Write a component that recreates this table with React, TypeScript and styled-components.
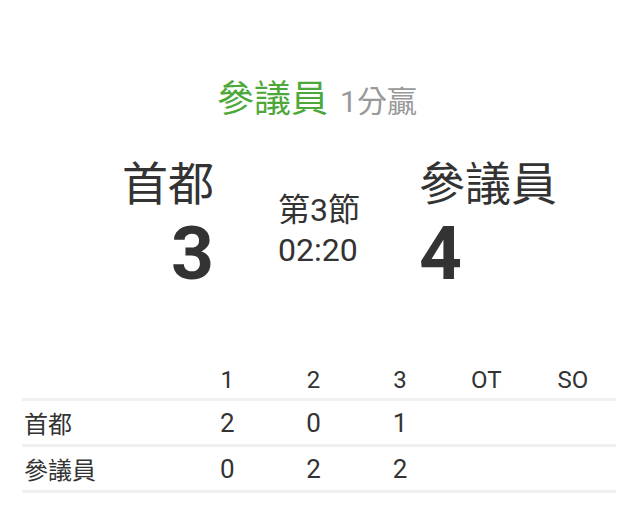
import * as React from "react"
import styled, { createGlobalStyle } from "styled-components"

const GlobalStyle = createGlobalStyle`
    body {
        margin: 0;
        background: #fff;
        font-family: Roboto, "Noto Sans CJK TC", sans-serif;
        color: #333;
    }
`

const Page = styled.div`
    width: 594px;
    margin-left: 22px;
    padding-top: 78px;
`

const Headline = styled.div`
    display: flex;
    justify-content: center;
    align-items: baseline;
    gap: 12px;
    padding-right: 4px;
    line-height: 44px;

    .leader {
        color: #4da83a;
        font-size: 37px;
    }

    .margin {
        color: #999;
        font-size: 30px;
    }
`

const Scoreboard = styled.div`
    display: grid;
    grid-template-columns: 1fr auto 1fr;
    margin-top: 33px;
`

const Team = styled.div<{ $side: "home" | "away" }>`
    display: flex;
    flex-direction: column;
    align-items: ${p => (p.$side === "home" ? "flex-end" : "flex-start")};
    padding: ${p => (p.$side === "home" ? "0 64px 0 0" : "0 0 0 59px")};

    .name {
        font-size: 46px;
        line-height: 54px;
    }

    .score {
        font-size: 75px;
        font-weight: 700;
        line-height: 76px;
        margin-top: 4px;
    }
`

const Clock = styled.div`
    display: flex;
    flex-direction: column;
    padding-top: 33px;
    font-size: 32px;
    line-height: 40px;
`

const Table = styled.table`
    width: 100%;
    margin-top: 72px;
    border-collapse: collapse;
    table-layout: fixed;
`

const HeadCell = styled.th<{ $first?: boolean }>`
    width: ${p => (p.$first ? "162px" : "auto")};
    font-weight: 400;
    font-size: 24px;
    line-height: 34px;
    text-align: center;
    padding: 0 0 1px;
    border-bottom: 3px solid #f0f0f0;
`

const LabelCell = styled.td`
    font-size: 24px;
    text-align: left;
    padding: 0 0 0 2px;
    height: 43px;
    border-bottom: 3px solid #f0f0f0;
`

const ScoreCell = styled.td`
    font-size: 26px;
    text-align: center;
    padding: 0;
    height: 43px;
    border-bottom: 3px solid #f0f0f0;
`

const periods = ["1", "2", "3", "OT", "SO"]

const rows = [
    { team: "首都", scores: ["2", "0", "1", "", ""] },
    { team: "參議員", scores: ["0", "2", "2", "", ""] }
]

export default function App() {
    return (
        <>
            <GlobalStyle />
            <Page>
                <Headline>
                    <span className="leader">參議員</span>
                    <span className="margin">1分贏</span>
                </Headline>
                <Scoreboard>
                    <Team $side="home">
                        <div className="name">首都</div>
                        <div className="score">3</div>
                    </Team>
                    <Clock>
                        <div>第3節</div>
                        <div>02:20</div>
                    </Clock>
                    <Team $side="away">
                        <div className="name">參議員</div>
                        <div className="score">4</div>
                    </Team>
                </Scoreboard>
                <Table>
                    <thead>
                        <tr>
                            <HeadCell $first />
                            {periods.map(p => (
                                <HeadCell key={p}>{p}</HeadCell>
                            ))}
                        </tr>
                    </thead>
                    <tbody>
                        {rows.map(row => (
                            <tr key={row.team}>
                                <LabelCell>{row.team}</LabelCell>
                                {row.scores.map((s, i) => (
                                    <ScoreCell key={i}>{s}</ScoreCell>
                                ))}
                            </tr>
                        ))}
                    </tbody>
                </Table>
            </Page>
        </>
    )
}
